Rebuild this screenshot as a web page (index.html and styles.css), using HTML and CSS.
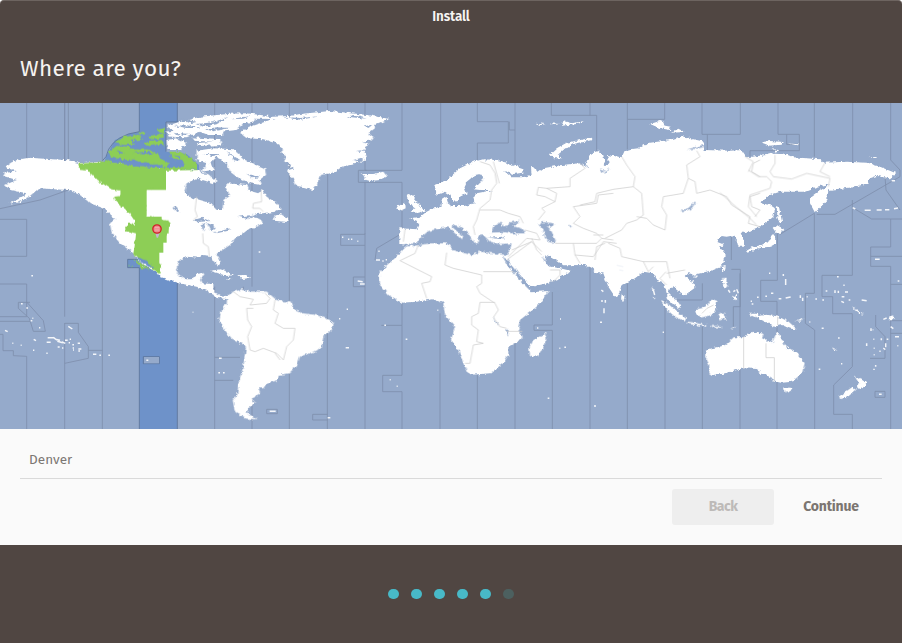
FILE: index.html
```html
<!DOCTYPE html>
<html lang="en">
<head>
<meta charset="utf-8">
<title>Install</title>
<link rel="stylesheet" href="styles.css">
</head>
<body>
<div class="window">
  <header class="titlebar"><span class="window-title">Install</span></header>
  <div class="heading"><h1>Where are you?</h1></div>
  <svg class="map" viewBox="0 9 2706 978" preserveAspectRatio="none" aria-hidden="true">
    <defs>
      <filter id="coast" x="0" y="0" width="2706" height="987" filterUnits="userSpaceOnUse" color-interpolation-filters="sRGB">
        <feTurbulence type="fractalNoise" baseFrequency="0.09" numOctaves="3" seed="4"/>
        <feDisplacementMap in="SourceGraphic" scale="13" xChannelSelector="R" yChannelSelector="G"/>
      </filter>
    </defs>
    <rect class="sea" y="9" width="2706" height="978"/>
    <!-- selected zone -->
    <path class="zone" d="M418 9H532V66H498V155L560 162 597 195V212H520L440 300 418 210H305L318 170 345 120 385 102 418 95ZM383 478H440L532 520V987H418V503H383Z"/>
    <path class="zone-edge" d="M418 9V95M532 9V66H498V155M418 987V503H383V478H430M532 987V540M305 185L318 170Q328 122 385 102L418 95M430 770H478V791H430Z"/>
    <rect class="sea" x="432" y="771" width="45" height="19"/>
    <!-- zone meridians and their detours -->
    <g class="zone-line">
      <path d="M80 9V175M194 9V182M80 987V769L40 767V752H9V703H0M0 358H80V469H0M205 9V270L120 300 0 326M194 669V987M194 9V650M307 9V987M644 9V400M644 560V987M756 9V560M756 750V987M868 9V987M983 9V640M982 640V987M1095 9V211M1095 211H1100"/>
      <path d="M0 552H80V650H0M0 664H90M80 606L130 662 136 694H100L88 655 55 625V607H90M194 790L265 775V740L235 697V670H194M265 751H307M644 772H720M644 841H700M727 700L730 560M800 928H832V941H800ZM983 943H938V960H983"/>
      <path d="M1206 9V211H1075V247H1206V400L1130 445 1125 480M1095 400V403H1022V436H1095M1095 247V987M1095 531H1060V560H1095M1206 610V676H1144M1206 676V826H1148V875H1206V987M1322 9V250M1320 640V987M1432 9V65H1525V129H1432V180M1528 65V90H1545V9M1545 90V190M1432 825V987M1545 730V987M1654 9V46H1790V190M1770 9V46M1657 570V675H1602V691H1657V987M1770 500V987"/>
      <path d="M1882 9V148M1883 58H1994V9M1882 540V987M1995 600V987M2106 9V103H2221V9M2122 103V150M2107 680V987M2107 550V600H2030M2194 400V480M2220 520V987M2334 9V103H2398V152H2250V170M2360 103V133H2398M2194 508H2221V620H2200V680M2332 400V541H2282V604H2331V987"/>
      <path d="M2443 9V170M2443 340V580H2416V670L2444 690V987M2558 9V190M2557 300V526H2466V590H2498V641H2557V800L2501 855V943H2557V987M2672 9V180L2700 210V230L2505 343H2450M2558 323L2615 357H2706M2672 357V441H2612V499H2672V987M2655 230L2658 270 2700 330M2612 469H2706M2672 553H2706M2627 645V680L2655 710V775H2610M2672 662H2706M2672 700H2706M2625 874H2655V892H2625ZM2340 403L2443 340"/>
    </g>
    <g class="land" filter="url(#coast)">
      <!-- North and Central America -->
      <path d="M238 190L310 185 350 192 450 205 598 210 612 225 580 240 560 250 553 275 570 290 600 300 630 308 650 330 668 330 670 300 690 285 678 265 680 250 740 255 748 272 775 280 785 270 800 290 830 310 842 325 825 335 770 342 738 360 760 352 780 357 788 370 768 380 750 385 730 400 705 415 690 435 660 455 650 465 662 490 655 497 642 485 635 468 605 465 600 473 560 470 535 485 528 510 535 525 555 538 575 538 590 522 612 518 600 540 605 550 640 552 640 575 665 590 685 586 688 598 650 594 620 572 590 560 530 548 480 530 470 515 430 497 400 460 360 430 335 400 330 370 345 358 340 350 310 325 270 310 240 285 205 270 160 268 120 265 90 290 60 303 25 312 60 295 80 280 30 270 15 255 50 240 10 228 15 218 50 215 15 200 35 187 60 178 88 173 205 181Z"/>
      <path d="M822 350L842 342 866 358 860 366 822 362ZM498 95L520 92 500 78 530 68 565 60 600 50 690 41 740 40 805 48 790 60 730 70 710 90 675 94 665 105 625 105 600 95 560 112 510 110ZM500 120L530 115 560 130 540 150 502 150ZM578 112L660 118 665 135 600 138ZM590 152L640 145 700 148 735 180 795 205 798 225 778 240 782 255 750 250 710 230 690 215 680 190 650 172 630 190 645 210 620 220 650 243 640 250 600 238 585 220 610 210 620 190 590 180Z"/>
      <path d="M630 512L665 508 703 526 680 528 650 518ZM712 526L735 525 750 533 730 537ZM678 534L693 535 685 539Z"/>
      <!-- Greenland and Iceland -->
      <path d="M718 97L750 80 805 62 785 52 870 48 900 42 990 33 1040 38 1100 45 1170 57 1125 75 1125 85 1105 100 1120 110 1100 140 1090 150 1100 160 1095 182 1040 195 1020 205 1000 218 960 225 950 255 938 270 915 262 890 258 875 230 862 212 872 190 852 185 860 170 845 160 845 145 830 130 790 118 740 115ZM1082 222L1120 222 1150 215 1160 228 1140 240 1110 243 1092 238 1098 230Z"/>
      <!-- South America -->
      <path transform="translate(600 480)" d="M82 108L100 95 125 88 150 95 200 95 230 120 275 128 285 150 310 160 350 165 390 180 402 190 395 210 370 230 365 260 350 272 300 290 290 320 265 340 235 345 235 360 200 370 190 385 175 385 180 400 155 415 165 428 145 445 140 457 170 478 135 476 105 455 98 420 112 405 115 370 130 320 138 260 95 235 70 205 55 180 60 160 80 130Z"/>
      <!-- Europe, Asia -->
      <path transform="translate(1140 0)" d="M58 385L112 388 118 375 110 362 90 355 120 350 140 335 160 325 185 320 185 300 200 290 203 310 215 318 250 318 285 310 280 295 290 280 340 270 300 270 280 268 300 245 310 235 300 222 285 225 260 245 253 260 260 280 240 290 235 303 222 305 210 285 195 275 170 285 163 255 200 240 240 205 280 185 310 178 350 180 380 188 430 205 430 218 400 222 372 213 395 232 425 232 455 225 453 200 475 215 490 205 540 196 600 190 625 205 617 192 635 160 655 152 670 165 675 195 690 190 680 165 725 172 735 150 775 145 800 130 870 120 905 108 940 118 975 125 975 140 970 150 1050 152 1085 150 1100 172 1160 165 1185 158 1210 160 1240 172 1320 178 1330 188 1400 185 1460 188 1500 200 1548 220 1530 235 1490 228 1470 235 1465 250 1420 262 1345 270 1342 300 1305 338 1290 310 1290 295 1320 272 1350 252 1310 260 1270 275 1200 275 1170 285 1140 310 1170 315 1185 325 1180 350 1150 375 1115 390 1082 400 1092 420 1092 440 1075 440 1070 420 1065 405 1040 410 1025 408 1010 425 1035 435 1020 440 1037 465 1030 490 1020 502 1000 510 940 525 925 520 915 530 940 545 943 565 915 585 890 570 880 555 870 565 865 580 885 600 902 620 895 625 875 605 860 580 852 550 835 545 820 520 790 515 765 535 725 555 715 585 705 590 685 560 670 520 650 520 635 505 615 495 550 496 525 478 500 465 495 490 520 500 572 512 540 535 500 550 450 562 380 465 370 410 58 432Z"/>
      <!-- Africa -->
      <path transform="translate(1080 390)" d="M140 48L110 80 75 110 58 130 60 165 85 195 125 218 170 215 220 208 250 220 255 255 285 290 273 330 295 360 320 425 335 434 390 430 430 400 445 375 445 350 488 325 475 290 480 270 530 230 568 180 515 185 470 120 450 30 150 0 120 40ZM555 308L560 325 545 360 530 380 510 378 508 355 520 330 545 318Z"/>
      <!-- British Isles -->
      <path transform="translate(600 0)" d="M620 287L635 282 645 290 642 303 655 310 665 325 675 330 660 338 632 338 645 325 630 315ZM595 315L615 308 617 325 600 333 588 328Z"/>
      <!-- Arctic islands, Sakhalin, Japan -->
      <path transform="translate(1140 0)" d="M510 163L530 145 560 128 635 113 637 120 580 132 550 150 533 165 547 175 520 175ZM465 68L500 73 480 75ZM510 70L540 72 520 76ZM550 63L575 70 610 64 590 72 545 77ZM600 66L613 65 603 70Z"/>
      <path transform="translate(1680 0)" d="M270 72L300 63 315 68 308 76 332 80 330 90 300 85ZM333 98L355 86 374 96ZM365 108L400 118 380 125Z"/>
      <path transform="translate(2160 0)" d="M122 127L150 123 190 126 185 134 150 137ZM202 130L234 133 230 136ZM155 148L180 151 165 155ZM445 174L465 170 473 174ZM170 318L177 320 186 365 177 368 172 350ZM160 385L170 375 193 388 180 398 165 398ZM155 402L166 405 165 432 150 440 120 443 95 452 80 460 78 452 95 442 125 435 150 420ZM3 502L17 498 12 512Z"/>
      <!-- South-east Asia -->
      <path transform="translate(1680 450)" d="M185 132L197 143 193 152 183 148ZM320 130L335 145 350 150 364 170 358 175 338 162 325 148ZM302 153L325 162 350 185 378 205 375 214 345 200 322 180ZM378 215L400 217 440 226 438 230 385 221ZM405 178L425 174 445 160 460 148 472 153 465 165 470 175 455 195 425 202 408 192ZM475 190L500 187 490 193 502 210 490 203 482 212ZM485 85L500 84 499 102 510 110 495 112 487 100ZM515 140L528 135 532 150 520 148ZM486 55L497 50 494 62 486 64ZM398 77L415 76 408 84ZM275 112L282 118 276 120ZM278 140L288 146 280 147ZM450 228L475 228 490 234 452 231ZM513 235L532 230 516 238Z"/>
      <!-- Australia, New Guinea, New Zealand -->
      <path transform="translate(2106 450)" d="M10 300L70 285 95 262 125 262 150 245 185 252 180 265 210 280 218 260 227 242 240 270 250 290 285 310 308 340 300 370 270 395 240 398 215 395 205 380 190 372 178 372 165 357 125 355 85 365 60 372 30 375 22 370 22 345 10 320ZM244 412L270 414 265 426 252 428ZM142 188L165 188 170 198 195 194 230 200 260 215 285 238 265 236 240 225 215 230 170 205 150 198ZM275 213L290 212 303 205 296 215ZM457 376L472 388 495 395 488 408 470 417 463 408 470 400ZM410 440L450 412 462 420 440 438 420 448ZM452 168L465 180 485 195 470 190 455 178ZM390 292L410 302 395 299ZM560 200L573 196 575 208 562 208Z"/>
    </g>
    <!-- selected zone land -->
    <path class="selected" d="M445 212H498V270H440V350H485V361H506V400H500V428H490V458H478V491L482 493 440 480 410 440 408 398 440 350 362 300V272H362L400 230Z"/>
    <g class="selected" filter="url(#coast)">
      <path d="M238 190L300 187 320 180 335 188 400 192 450 203 540 203 597 210 492 212 490 262 436 268 436 350 480 354 510 370 502 400 490 428 470 458 478 491 484 500 481 522 450 502 400 460 406 425 408 400 380 393 375 385 388 370 402 373 402 360 385 335 345 302 343 290 362 288 362 272 335 268 290 240 265 212 240 210Z"/>
      <path d="M325 155L350 138 385 140 400 148 440 148 475 160 480 175 510 190 500 203 470 193 440 195 400 178 370 180 330 168ZM340 128L375 110 415 104 430 118 395 122 405 133 370 135ZM412 98L440 94 430 108ZM470 90L495 84V100L480 98ZM445 108L490 100 492 112 460 118ZM430 128L485 120 495 135 460 133 440 137ZM508 155L540 155 575 175 595 197 590 208 545 206 555 190 540 178 515 175ZM400 478L415 482 435 500 446 510 425 504ZM388 495L398 500 390 501Z"/>
    </g>
    <g class="selected-water" filter="url(#coast)"><path d="M330 178L380 183 440 187 470 199 440 197 400 200 375 189ZM400 158L440 155 460 160 430 163ZM350 150L375 160 360 160ZM500 193L535 190 530 202 510 197ZM520 165L545 170 540 174ZM412 469L440 484 462 502 445 500 420 484Z"/></g>
    <!-- inland and enclosed waters -->
    <g class="water" filter="url(#coast)">
      <path d="M518 318L530 320 540 338 532 336ZM580 360L605 353 630 363 595 366ZM605 373L615 370 610 395ZM620 370L640 375 645 388 632 394ZM638 396L660 394 690 385 685 392 650 400ZM520 78L560 76 600 84 560 84ZM540 55L590 66 570 70ZM590 72L640 67 685 50 650 73 610 80ZM520 98L570 102 550 108ZM615 88L650 82 690 84 640 94ZM575 122L640 125 590 129ZM610 162L660 162 640 168ZM680 155L720 180 705 183ZM600 215L635 211 640 220 610 221ZM740 222L780 230 760 235ZM715 350L760 344 740 356Z"/>
      <path d="M690 58L750 48 730 56ZM760 56L830 57 780 65ZM840 50L900 54 960 49 900 59ZM1060 45L1100 56 1040 50ZM1090 80L1120 72 1105 84ZM1090 125L1120 120 1110 130ZM1070 152L1098 151 1080 156ZM1060 180L1090 172 1080 185ZM860 200L885 205 865 210Z"/>
      <path transform="translate(1140 0)" d="M70 433L110 430 125 410 145 393 180 385 205 382 225 400 245 419 250 410 238 400 215 380 218 374 240 380 265 400 285 430 298 428 295 408 310 405 330 425 360 432 395 430 390 450 380 465 340 460 300 455 275 465 220 450 200 430 150 430 110 437 70 440ZM333 398L340 378 360 368 370 378 385 376 388 367 410 365 420 362 400 378 430 388 435 400 400 400 370 396ZM475 373L490 366 522 370 518 380 500 380 515 395 528 425 515 428 495 418 493 395ZM565 374L578 379 573 383ZM295 230L310 240 292 248ZM660 208L675 213 692 205 680 216 665 216ZM900 332L925 324 945 305 948 308 932 328 910 333ZM915 150L965 136 978 140 950 146Z"/>
      <path transform="translate(1080 390)" d="M428 80L440 88 470 125 500 158 515 177 570 170 600 185 568 183 515 187 500 172 475 145 445 110ZM545 78L560 95 590 98 600 105 570 112 555 97ZM400 262L408 275 418 290 405 280ZM440 295L447 307 444 320 440 308Z"/>
    </g>
    <!-- borders between zones on land -->
    <g class="border">
      <path d="M590 290L585 330 592 350 580 360M608 400L610 430 625 440 628 470M783 270L785 305 760 310 758 325 780 325 790 335"/>
      <path transform="translate(600 480)" d="M100 95L120 110 160 118 150 135 200 130 210 115 195 100M160 145L140 145 143 180 155 200 143 230 150 270 165 275 190 265 230 280 250 300 260 260 280 240 285 205 250 205 225 190 235 160 220 150 225 120M225 280L240 300"/>
      <path transform="translate(1140 0)" d="M75 388L70 425M300 185L330 195 345 220 350 250 335 270 330 300 300 325 290 360 280 380 285 405M300 330L360 330 385 340 420 350 430 370M340 185L358 250M600 190L615 205 570 235 570 260 500 265 475 262 470 285 495 290 525 305 530 280 500 265M525 305L485 325 495 335 475 360M700 280L655 285 650 310 580 320 600 350 580 370 610 385 650 400 665 415 700 420M435 390L470 400 480 420 440 415 385 470M455 415L470 450 485 465M525 430L580 430 585 465 600 490M580 430L650 430 665 415M585 465L640 470 670 425 710 430"/>
      <path transform="translate(1680 0)" d="M185 170L200 195 225 230 220 260 160 268 110 280 105 305 60 315M220 260L245 280 250 345 230 360 200 370 185 390 135 415M230 350L260 355 280 375 315 390 320 345 305 320 310 290 370 280 385 235 380 195 420 170 410 152M385 235L405 245 410 280 450 270 500 290 515 315 570 350 565 370 600 380M600 280L570 290 575 320 600 330 585 350M600 180L580 190 575 215 600 230M145 430L180 445 185 470 250 485 265 515 280 500M100 405L130 405M135 430L110 440 105 480M250 485L320 485 330 535M318 515L300 535 320 555M320 520L375 510"/>
      <path transform="translate(2160 0)" d="M0 278L50 322 90 355 110 375M85 210L115 230 140 230 155 245 150 265 90 285 85 320 110 350M165 165L165 190 150 215 160 230 215 237 260 220 330 235 325 260M75 170L100 185 85 215M315 188L300 215 330 230"/>
      <path transform="translate(1080 390)" d="M175 45L165 70 120 92 215 140 210 155 185 160 200 205M260 68L255 105 280 115 365 135 365 160 350 170 360 190 405 220 415 240 400 262M370 125H460M360 217H405M360 217L355 250 335 260 335 285 355 300 350 335 370 340 340 345 330 400 315 400M400 262L420 290 440 295M440 304H487M455 60L515 35 545 65M440 90L515 35M570 120L600 120 600 135 580 155"/>
      <path transform="translate(2106 450)" d="M125 260V356M192 280V323H217V395M227 200V225M0 190L15 175 35 165"/>
    </g>
    <!-- small islands -->
    <g class="islets">
      <path d="M94 527h5M63 611h5M79 624h5M97 655h3M92 662h5M117 683h4M15 691l8 4M37 730h3M62 736h3M101 718l7 4M99 751h4M139 760h4M140 727h12M143 713h20M160 712l10 8M166 718l14 3M172 724l16 4M186 726l10 4M195 721h8M173 741h6M186 744h4M206 728h4M217 734h5M218 744h4M219 750h3M233 730h7M235 747h9M235 753h5M209 718h4M205 679l12 8M279 763h10M298 766h5M325 766h5M439 781h6M578 637h2M657 775h8M655 818h5M669 818h5M776 456h5M1026 412h4M1044 418h4M1053 418h4M1072 424h3M1135 454h4M1128 480h12M1147 483h4M1157 479h4"/>
      <path d="M1073 543l15 2M1080 552h14M1040 628h4M1017 656h4M1037 743h10M1153 676h5M1217 718h5M1169 839h3M1190 859h3M809 934h18M983 953h8M1312 631h3M1611 684h4M1680 657h3M1678 745h3M1693 742h5M1643 895h5M1782 918h6M1804 570l6 5M1806 600v6M1812 625v15M1816 600v8M1800 667h6M1988 697h4"/>
      <path d="M2255 612h5M2252 604h4M2271 592h5M2296 589h5M2313 580h7M2336 596h8M2357 594l15-3M2307 520h4M2350 522v6M2357 537v18M2401 586v8M2408 593v10M2420 590h3M2446 597h5M2467 600h5M2477 573h5M2511 530h5M2505 571v8M2515 572v7M2530 556h4M2535 576h9M2525 590h8M2524 604l8 4M2546 600h5M2585 600l15 2M2625 478h14M2693 543h5M2650 658l10-4M2613 685v8M2618 689h2M2600 730v8M2620 718h3M2644 715v6M2660 718h5M2657 730v12M2650 744l6 5M2638 754h4M2621 745h3M2621 764h3M2672 680l8 6M2685 710h12M2692 737h3M2627 795v5M2622 806v4M2637 883h8M2523 791h4M2456 808h5M2428 666h3M2465 685h6M2514 714h5M2558 323l8 4M2594 331h18M2630 330h15M2655 329h13M2682 326l12-2M2675 242h10M2185 570l5 8M2200 575l6-4M2210 568l5 12M1960 570l4 15M1850 496l20 4M1858 510l12 2"/>
    </g>
    <!-- location pin -->
    <path class="pin-tip" d="M466 400H479L474 413H470Z"/>
    <circle class="pin" cx="471" cy="387" r="12.5"/>
    <path class="pin-lines" d="M465 383H477M465 390H477"/>
  </svg>
  <main class="form">
    <div class="location">Denver</div>
    <div class="actions">
      <button class="button" disabled>Back</button>
      <button class="button continue">Continue</button>
    </div>
  </main>
  <footer class="progress">
    <i class="dot"></i><i class="dot"></i><i class="dot"></i><i class="dot"></i><i class="dot"></i><i class="dot pending"></i>
  </footer>
</div>
</body>
</html>
```
FILE: styles.css
```css
* { box-sizing: border-box; }
body {
  margin: 0;
  background: #fff;
  font-family: "Fira Sans", "Noto Sans", sans-serif;
}
.window {
  width: 902px;
  height: 643px;
  display: flex;
  flex-direction: column;
  overflow: hidden;
  background: #504642;
  border-top: 1px solid #6d6460;
  border-radius: 4px 4px 0 0;
}
.titlebar {
  height: 32px;
  display: flex;
  justify-content: center;
  align-items: center;
  padding-bottom: 1px;
  color: #f7f5f3;
}
.window-title {
  font-size: 13.5px;
  font-weight: 600;
  letter-spacing: -0.15px;
}
.heading {
  height: 70px;
  padding: 17px 20px 0;
}
h1 {
  margin: 0;
  font-size: 22.5px;
  line-height: 37px;
  font-weight: 400;
  color: #f6f3f0;
  letter-spacing: 0.38px;
}
.map {
  display: block;
  width: 902px;
  height: 326px;
  flex: none;
}
.sea, .water { fill: #95aacb; }
.zone, .selected-water { fill: #6e92c9; }
.zone-edge { fill: none; stroke: #5d7599; stroke-width: 2.5; }
.zone-line { fill: none; stroke: #8090ae; stroke-width: 2.6; }
.land { fill: #fff; }
.selected { fill: #8dce56; }
.border { fill: none; stroke: #ccc; stroke-width: 2.2; stroke-linejoin: round; }
.islets { fill: none; stroke: #f4f6fa; stroke-width: 4.5; }
.pin-tip { fill: #c3b5cf; }
.pin { fill: #f18a8d; stroke: #cf2027; stroke-width: 4; }
.pin-lines { fill: none; stroke: #f9bcbc; stroke-width: 2; }
.form {
  height: 116px;
  padding: 11px 20px 0;
  background: #fafafa;
}
.location {
  height: 39px;
  padding-left: 9px;
  border-bottom: 1px solid #dadada;
  font-size: 13.5px;
  line-height: 39px;
  letter-spacing: 0.05px;
  color: #7c7773;
}
.actions {
  display: flex;
  justify-content: flex-end;
  gap: 6px;
  padding-top: 10px;
}
.button {
  width: 102px;
  height: 36px;
  padding: 0 0 2px;
  border: 0;
  border-radius: 3px;
  background: transparent;
  font: 700 14px "Fira Sans", "Noto Sans", sans-serif;
  letter-spacing: -0.2px;
  color: #7b7571;
}
.button:disabled {
  background: #eee;
  color: #bdbab8;
  letter-spacing: -0.5px;
}
.progress {
  flex: 1;
  display: flex;
  justify-content: center;
  gap: 12px;
  padding-top: 44px;
}
.dot {
  width: 11px;
  height: 10px;
  border-radius: 5px;
  background: #48b9c7;
}
.dot.pending { background: #4c605f; }
```
